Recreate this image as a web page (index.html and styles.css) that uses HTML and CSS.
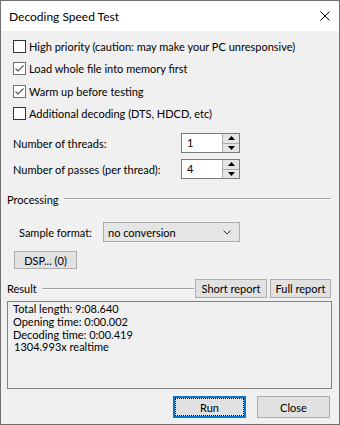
FILE: index.html
```html
<!DOCTYPE html>
<html lang="en">
<head>
    <meta charset="UTF-8">
    <meta name="viewport" content="width=device-width, initial-scale=1.0">
    <title>Decoding Speed Test</title>
    <link rel="stylesheet" href="styles.css">
</head>
<body>
    <div class="window">
        <div class="titlebar">
            <span class="title">Decoding Speed Test</span>
            <svg class="close-icon" width="10" height="10" viewBox="0 0 10 10">
                <path d="M0.5 0.5 L9.5 9.5 M9.5 0.5 L0.5 9.5" stroke="#000" stroke-width="1" fill="none"/>
            </svg>
        </div>
        <div class="content">
            <div class="checks">
                <label class="check"><span class="box"></span>High priority (caution: may make your PC unresponsive)</label>
                <label class="check"><span class="box checked"><svg width="11" height="11" viewBox="0 0 11 11"><path d="M1.5 5.5 L4 8 L9.5 2.5" stroke="#555" stroke-width="1.2" fill="none"/></svg></span>Load whole file into memory first</label>
                <label class="check"><span class="box checked"><svg width="11" height="11" viewBox="0 0 11 11"><path d="M1.5 5.5 L4 8 L9.5 2.5" stroke="#555" stroke-width="1.2" fill="none"/></svg></span>Warm up before testing</label>
                <label class="check"><span class="box"></span>Additional decoding (DTS, HDCD, etc)</label>
            </div>
            <div class="numbers">
                <span class="num-label">Number of threads:</span>
                <div class="spin">
                    <span class="spin-value">1</span>
                    <div class="spin-buttons">
                        <span class="spin-btn"><svg width="7" height="4" viewBox="0 0 7 4"><path d="M0 4 L3.5 0 L7 4 Z" fill="#000"/></svg></span>
                        <span class="spin-btn"><svg width="7" height="4" viewBox="0 0 7 4"><path d="M0 0 L3.5 4 L7 0 Z" fill="#000"/></svg></span>
                    </div>
                </div>
                <span class="num-label">Number of passes (per thread):</span>
                <div class="spin">
                    <span class="spin-value">4</span>
                    <div class="spin-buttons">
                        <span class="spin-btn"><svg width="7" height="4" viewBox="0 0 7 4"><path d="M0 4 L3.5 0 L7 4 Z" fill="#000"/></svg></span>
                        <span class="spin-btn"><svg width="7" height="4" viewBox="0 0 7 4"><path d="M0 0 L3.5 4 L7 0 Z" fill="#000"/></svg></span>
                    </div>
                </div>
            </div>
            <div class="group-head processing">
                <span class="group-label">Processing</span>
                <span class="group-line"></span>
            </div>
            <div class="format-row">
                <span class="format-label">Sample format:</span>
                <div class="combo">
                    <span>no conversion</span>
                    <svg width="8" height="5" viewBox="0 0 8 5"><path d="M0.5 0.5 L4 4 L7.5 0.5" stroke="#333" stroke-width="1" fill="none"/></svg>
                </div>
            </div>
            <button class="btn dsp">DSP... (0)</button>
            <div class="group-head result-head">
                <span class="group-label">Result</span>
                <span class="group-line"></span>
                <button class="btn small">Short report</button>
                <button class="btn small full">Full report</button>
            </div>
            <div class="result-box">
                <div>Total length: 9:08.640</div>
                <div>Opening time: 0:00.002</div>
                <div>Decoding time: 0:00.419</div>
                <div class="indent">1304.993x realtime</div>
            </div>
            <div class="actions">
                <button class="btn action default">Run</button>
                <button class="btn action">Close</button>
            </div>
        </div>
    </div>
</body>
</html>
```

FILE: styles.css
```css
body {
    margin: 0;
    padding: 0;
    font-family: Lato, 'Liberation Sans', sans-serif;
    font-size: 11px;
    line-height: 15px;
    color: #000;
    background-color: #f0f0f0;
    white-space: nowrap;
}
.window {
    width: 340px;
    height: 425px;
    box-sizing: border-box;
    border: 1px solid #707070;
    background-color: #f0f0f0;
    display: flex;
    flex-direction: column;
}
.titlebar {
    height: 30px;
    flex-shrink: 0;
    background-color: #fff;
    display: flex;
    align-items: center;
    justify-content: space-between;
    padding: 0 9px 0 8px;
}
.title {
    font-size: 12px;
}
.content {
    flex: 1;
    display: flex;
    flex-direction: column;
}
.checks {
    padding: 4px 0 0 12px;
}
.check {
    display: flex;
    align-items: center;
    height: 22.5px;
}
.box {
    width: 13px;
    height: 13px;
    flex-shrink: 0;
    box-sizing: border-box;
    border: 1px solid #333;
    background-color: #fff;
    margin-right: 3px;
    display: flex;
    align-items: center;
    justify-content: center;
}
.box.checked {
    border-color: #707070;
}
.numbers {
    display: grid;
    grid-template-columns: 168px 59px;
    row-gap: 6px;
    align-items: center;
    margin: 8px 0 0 12px;
}
.spin {
    height: 20px;
    box-sizing: border-box;
    border: 1px solid #7a7a7a;
    background-color: #fff;
    display: flex;
}
.spin-value {
    flex: 1;
    padding-left: 5px;
    line-height: 18px;
}
.spin-buttons {
    width: 16px;
    display: flex;
    flex-direction: column;
    border-left: 1px solid #acacac;
}
.spin-btn {
    flex: 1;
    background-color: #e5e5e5;
    display: flex;
    align-items: center;
    justify-content: center;
}
.spin-btn + .spin-btn {
    border-top: 1px solid #acacac;
}
.group-head {
    display: flex;
    align-items: center;
    padding: 0 8px 0 6px;
}
.processing {
    height: 14px;
    margin-top: 13px;
}
.group-label {
    margin-right: 5px;
}
.group-line {
    flex: 1;
    border-top: 1px solid #a0a0a0;
    border-bottom: 1px solid #fff;
}
.format-row {
    display: flex;
    align-items: center;
    margin: 16px 0 0 18px;
}
.format-label {
    width: 84px;
}
.combo {
    width: 137px;
    height: 20px;
    box-sizing: border-box;
    border: 1px solid #adadad;
    background-color: #e5e5e5;
    display: flex;
    align-items: center;
    justify-content: space-between;
    padding: 0 8px 0 4px;
}
.btn {
    font-family: inherit;
    font-size: 11px;
    line-height: 15px;
    color: #000;
    background-color: #e1e1e1;
    border: 1px solid #adadad;
    border-radius: 0;
    padding: 0;
    margin: 0;
}
.dsp {
    width: 63px;
    height: 18px;
    margin: 9px 0 0 13px;
    align-self: flex-start;
}
.result-head {
    height: 19px;
    margin-top: 10px;
}
.result-head .group-line {
    margin-right: 1px;
}
.small {
    height: 19px;
    width: 72px;
}
.small.full {
    width: 61px;
    margin-left: 3px;
}
.result-box {
    margin: 3px 7px 0 6px;
    height: 88px;
    box-sizing: border-box;
    border: 1px solid #828282;
    padding: 1px 5px;
    line-height: 12.8px;
}
.indent {
    padding-left: 1px;
}
.actions {
    display: flex;
    justify-content: flex-end;
    gap: 11px;
    margin: 7px 9px 0 0;
}
.action {
    width: 73px;
    height: 22px;
}
.default {
    border: 2px solid #0078d7;
    outline: 1px dotted #000;
    outline-offset: -3px;
}
```
